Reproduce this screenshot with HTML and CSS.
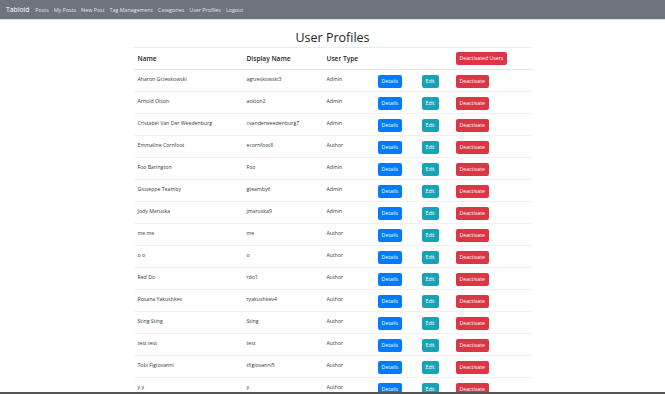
FILE: index.html
```html
<!DOCTYPE html>
<html lang="en">
<head>
<meta charset="utf-8">
<title>Tabloid</title>
<link rel="stylesheet" href="styles.css">
</head>
<body>
<nav class="navbar">
  <span class="brand">Tabloid</span>
  <ul class="nav-links">
    <li>Posts</li>
    <li>My Posts</li>
    <li>New Post</li>
    <li>Tag Management</li>
    <li>Categories</li>
    <li>User Profiles</li>
    <li>Logout</li>
  </ul>
</nav>
<main class="container">
  <h2 class="title">User Profiles</h2>
  <table class="profiles">
    <colgroup>
      <col class="c-name"><col class="c-display"><col class="c-type"><col class="c-details"><col class="c-edit"><col class="c-deact">
    </colgroup>
    <thead>
      <tr><th>Name</th><th>Display Name</th><th>User Type</th><th></th><th></th><th><button class="btn btn-danger">Deactivated Users</button></th></tr>
    </thead>
    <tbody>
      <tr><td>Aharon Grzeskowski</td><td>agrzeskowski3</td><td>Admin</td><td><button class="btn btn-primary">Details</button></td><td><button class="btn btn-info">Edit</button></td><td><button class="btn btn-danger">Deactivate</button></td></tr>
      <tr><td>Arnold Otton</td><td>aotton2</td><td>Admin</td><td><button class="btn btn-primary">Details</button></td><td><button class="btn btn-info">Edit</button></td><td><button class="btn btn-danger">Deactivate</button></td></tr>
      <tr><td>Cristabel Van Der Weedenburg</td><td>cvanderweedenburg7</td><td>Admin</td><td><button class="btn btn-primary">Details</button></td><td><button class="btn btn-info">Edit</button></td><td><button class="btn btn-danger">Deactivate</button></td></tr>
      <tr><td>Emmaline Cornfoot</td><td>ecornfoot8</td><td>Author</td><td><button class="btn btn-primary">Details</button></td><td><button class="btn btn-info">Edit</button></td><td><button class="btn btn-danger">Deactivate</button></td></tr>
      <tr><td>Foo Barington</td><td>Foo</td><td>Admin</td><td><button class="btn btn-primary">Details</button></td><td><button class="btn btn-info">Edit</button></td><td><button class="btn btn-danger">Deactivate</button></td></tr>
      <tr><td>Giuseppe Teamby</td><td>gteamby6</td><td>Admin</td><td><button class="btn btn-primary">Details</button></td><td><button class="btn btn-info">Edit</button></td><td><button class="btn btn-danger">Deactivate</button></td></tr>
      <tr><td>Jody Maruska</td><td>jmaruska9</td><td>Admin</td><td><button class="btn btn-primary">Details</button></td><td><button class="btn btn-info">Edit</button></td><td><button class="btn btn-danger">Deactivate</button></td></tr>
      <tr><td>me me</td><td>me</td><td>Author</td><td><button class="btn btn-primary">Details</button></td><td><button class="btn btn-info">Edit</button></td><td><button class="btn btn-danger">Deactivate</button></td></tr>
      <tr><td>o o</td><td>o</td><td>Author</td><td><button class="btn btn-primary">Details</button></td><td><button class="btn btn-info">Edit</button></td><td><button class="btn btn-danger">Deactivate</button></td></tr>
      <tr><td>Red Do</td><td>rdo1</td><td>Author</td><td><button class="btn btn-primary">Details</button></td><td><button class="btn btn-info">Edit</button></td><td><button class="btn btn-danger">Deactivate</button></td></tr>
      <tr><td>Rosana Yakushkev</td><td>ryakushkev4</td><td>Author</td><td><button class="btn btn-primary">Details</button></td><td><button class="btn btn-info">Edit</button></td><td><button class="btn btn-danger">Deactivate</button></td></tr>
      <tr><td>Sting Sting</td><td>Sting</td><td>Author</td><td><button class="btn btn-primary">Details</button></td><td><button class="btn btn-info">Edit</button></td><td><button class="btn btn-danger">Deactivate</button></td></tr>
      <tr><td>test test</td><td>test</td><td>Author</td><td><button class="btn btn-primary">Details</button></td><td><button class="btn btn-info">Edit</button></td><td><button class="btn btn-danger">Deactivate</button></td></tr>
      <tr><td>Tobi Figiovanni</td><td>tfigiovanni5</td><td>Author</td><td><button class="btn btn-primary">Details</button></td><td><button class="btn btn-info">Edit</button></td><td><button class="btn btn-danger">Deactivate</button></td></tr>
      <tr><td>y y</td><td>y</td><td>Author</td><td><button class="btn btn-primary">Details</button></td><td><button class="btn btn-info">Edit</button></td><td><button class="btn btn-danger">Deactivate</button></td></tr>
    </tbody>
  </table>
</main>
<div class="window-edge"></div>
</body>
</html>
```

FILE: styles.css
```css
html, body {
  margin: 0;
  padding: 0;
  overflow: hidden;
  background: #fff;
}
body {
  font-family: "Open Sans", "Noto Sans", sans-serif;
  color: #212529;
}
.navbar {
  height: 19px;
  background: #6c757d;
  display: flex;
  align-items: center;
  padding-left: 6px;
  border-bottom: 1px solid #dfe2e5;
}
.brand {
  color: #fff;
  font-size: 6.8px;
  margin-right: 6px;
}
.nav-links {
  display: flex;
  gap: 5px;
  list-style: none;
  margin: 0;
  padding: 0;
  font-size: 5.35px;
  color: rgba(255, 255, 255, 0.85);
}
.container {
  width: 398px;
  margin: 0 auto;
}
.title {
  font-size: 12.5px;
  font-weight: 500;
  text-align: center;
  line-height: 15px;
  margin: 10px 0 2px;
}
.profiles {
  width: 398px;
  border-collapse: collapse;
  table-layout: fixed;
  font-size: 5.2px;
}
.c-name { width: 109px; }
.c-display { width: 80px; }
.c-type { width: 51px; }
.c-details { width: 44px; }
.c-edit { width: 34px; }
.c-deact { width: 80px; }
.profiles th {
  font-size: 6.6px;
  font-weight: 600;
  text-align: left;
  padding: 0 4px;
  height: 21px;
  vertical-align: middle;
  border-top: 1px solid #e9ecef;
  border-bottom: 1px solid #e3e6e9;
}
.profiles td {
  height: 22px;
  box-sizing: border-box;
  padding: 5px 4px 0;
  vertical-align: top;
  line-height: 8px;
  border-top: 1px solid #eef0f2;
  color: #343a40;
}
.btn {
  font-family: inherit;
  font-size: 5.2px;
  height: 13px;
  line-height: 13px;
  padding: 0 4px;
  border: none;
  border-radius: 2px;
  color: #fff;
  display: inline-block;
  vertical-align: top;
}
.btn-primary { background: #007bff; }
.btn-info { background: #17a2b8; }
.btn-danger { background: #dc3545; }
.window-edge {
  position: fixed;
  left: 0;
  right: 0;
  bottom: 0;
  height: 2px;
  background: #555;
}
```
